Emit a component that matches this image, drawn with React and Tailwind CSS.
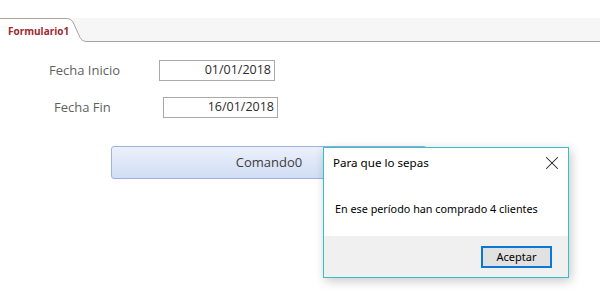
import { X } from 'lucide-react';

function TabStrip() {
    return (
        <div className="mt-[18px] flex h-[24px]">
            {/* Tab */}
            <div className="relative w-[86px]">
                <svg className="absolute inset-0" width="86" height="24" viewBox="0 0 86 24">
                    <rect width="86" height="24" fill="#f6f6f6" />
                    <path d="M0 0.5 H67 Q71 0.5 73 4 L80 19.5 Q82 23.5 86 23.5 V24 H0 Z" fill="#ffffff" />
                    <path d="M0 0.5 H67 Q71 0.5 73 4 L80 19.5 Q82 23.5 86 23.5" fill="none" stroke="#aaa49b" strokeWidth="1" />
                </svg>
                <span className="relative block pl-[8px] pt-[6px] text-[10px] leading-[15px] font-bold text-[#a0282e] font-['Open_Sans',sans-serif]">
                    Formulario1
                </span>
            </div>
            <div className="flex-1 border-b border-b-[#a3a3a3] bg-[#f6f6f6]" />
        </div>
    );
}

function Field({ label, value, pad, labelW, inputW, className = '' }) {
    return (
        <div className={`flex h-[21px] items-center ${pad} ${className}`}>
            <span className={`${labelW} text-[13px] text-[#5f5f5f]`}>{label}</span>
            <div className={`${inputW} flex h-[21px] items-center justify-end border border-[#a9a9a9] pr-[3px] text-[12.5px] text-[#2b2b2b]`}>
                {value}
            </div>
        </div>
    );
}

export default function App() {
    return (
        <div className="relative h-[301px] w-[600px] overflow-hidden bg-white font-['Open_Sans',sans-serif]">
            <TabStrip />

            <div className="pt-[18px]">
                <Field label="Fecha Inicio" value="01/01/2018" pad="pl-[49px]" labelW="w-[110px]" inputW="w-[116px]" />
                <Field label="Fecha Fin" value="16/01/2018" pad="pl-[54px]" labelW="w-[109px]" inputW="w-[115px]" className="mt-[16px]" />

                <button className="ml-[111px] mt-[28px] flex h-[33px] w-[316px] items-center justify-center rounded-[3px] border border-[#9db3de] bg-gradient-to-b from-[#ebf0fb] to-[#d2def5] text-[13px] text-[#3c3c3c]">
                    Comando0
                </button>
            </div>

            {/* Message box */}
            <div className="absolute left-[323px] top-[147px] flex h-[131px] w-[246px] flex-col border border-[#35bfc7] bg-white shadow-[2px_3px_10px_rgba(0,0,0,0.22)] font-['Noto_Sans',sans-serif] text-black">
                <div className="flex h-[30px] items-center justify-between pl-[9px] pr-[5px]">
                    <span className="text-[11.6px]">Para que lo sepas</span>
                    <X className="h-[22px] w-[22px] text-[#222]" strokeWidth={1.1} />
                </div>
                <div className="flex h-[58px] items-start pl-[11px] pt-[23px] text-[10.8px]">
                    En ese período han comprado 4 clientes
                </div>
                <div className="flex flex-1 justify-end bg-[#f0f0f0] pr-[16px] pt-[10px]">
                    <button className="flex h-[22px] w-[71px] items-center justify-center border-2 border-[#0a78d7] bg-[#e1e1e1] text-[11px]">
                        Aceptar
                    </button>
                </div>
            </div>
        </div>
    );
}
